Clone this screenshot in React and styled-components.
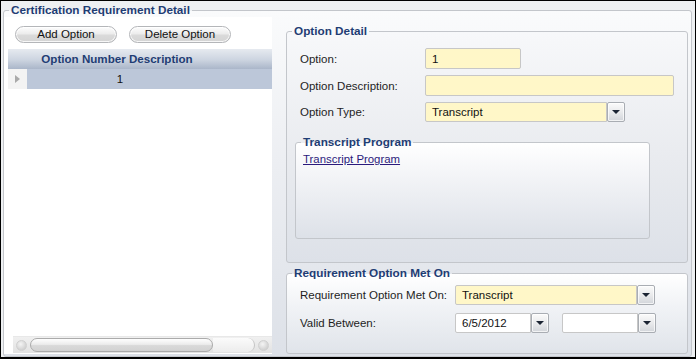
import React from 'react'
import styled, { createGlobalStyle } from 'styled-components'

const GlobalStyle = createGlobalStyle`
  html, body {
    margin: 0;
    padding: 0;
    background: #eef0f2;
  }

  body {
    font-family: "Liberation Sans", Arial, sans-serif;
    color: #1e1e1e;
  }
`

const Frame = styled.div`
  box-sizing: border-box;
  width: 696px;
  height: 359px;
  border: 1px solid #000;
  border-bottom-width: 2px;
  padding: 2px 3px 0 2px;
  background: #eef0f2;
  display: flex;
`

const GroupBox = styled.fieldset`
  box-sizing: border-box;
  margin: 0;
  padding: 0;
  min-width: 0;
  border: 1px solid #c3c6cb;
  border-radius: 3px;
  display: flex;
  flex-direction: column;
  background: ${props => props.$bg || 'transparent'};
  width: ${props => props.$width ? `${props.$width}px` : 'auto'};
  height: ${props => props.$height ? `${props.$height}px` : 'auto'};
  flex: ${props => props.$grow ? '1' : 'none'};
  margin-top: ${props => props.$top || 0}px;
`

const GroupTitle = styled.legend`
  margin-left: 5px;
  padding: 0 2px;
  font: bold 11.75px/14px "Liberation Sans", Arial, sans-serif;
  color: #1f3d74;
`

const OuterBody = styled.div`
  flex: 1;
  min-height: 0;
  display: flex;
  gap: 14px;
  padding: 0 3px 2px 0;
`

// left side: option list
const ListPanel = styled.div`
  box-sizing: border-box;
  width: 268px;
  background: #fff;
  display: flex;
  flex-direction: column;
  padding: 9px 0 1px 4px;
`

const ButtonRow = styled.div`
  display: flex;
  gap: 12px;
  margin-left: 7px;
`

const PillButton = styled.button`
  box-sizing: border-box;
  width: 102px;
  height: 17px;
  padding: 0;
  border: 1px solid #b4b6b9;
  border-radius: 9px;
  background: linear-gradient(#fdfdfd, #ececec 45%, #dadada 55%, #d4d4d4);
  box-shadow: inset 0 0 0 1px rgba(255, 255, 255, 0.8);
  font: 11.5px/15px "Liberation Sans", Arial, sans-serif;
  color: #111;
`

const Grid = styled.div`
  margin-top: 6px;
  display: flex;
  flex-direction: column;
`

const HeaderRow = styled.div`
  display: flex;
  height: 20px;
  background: linear-gradient(#e6eaf0, #ccd4e0 55%, #aab6c9);
`

const RowSelector = styled.div`
  box-sizing: border-box;
  width: 19px;
  display: flex;
  align-items: center;
  padding-left: 7px;
  background: ${props => props.$header ? 'transparent' : '#f3f3f3'};
`

const Arrow = styled.span`
  width: 0;
  height: 0;
  border-top: 4px solid transparent;
  border-bottom: 4px solid transparent;
  border-left: 5px solid #a9a9a9;
`

const HeaderCell = styled.div`
  width: 180px;
  text-align: center;
  font: bold 11.6px/20px "Liberation Sans", Arial, sans-serif;
  color: #1f3d74;
  white-space: nowrap;
`

const DataRow = styled.div`
  display: flex;
  height: 20px;
`

const DataCell = styled.div`
  flex: 1;
  background: #bcc7d9;
  font: 11.5px/20px "Liberation Sans", Arial, sans-serif;
  color: #111;
`

const CellText = styled.div`
  width: 186px;
  text-align: center;
`

const Spacer = styled.div`
  flex: 1;
`

const ScrollBar = styled.div`
  box-sizing: border-box;
  height: 17px;
  margin-left: 5px;
  display: flex;
  align-items: center;
  background: linear-gradient(#f0f0f0, #e2e2e2);
  border-top: 1px solid #e8e8e8;
`

const ScrollArrow = styled.div`
  width: 17px;
  height: 15px;
  display: flex;
  align-items: center;
  justify-content: center;

  &::after {
    content: '';
    width: 9px;
    height: 9px;
    border-radius: 50%;
    background: radial-gradient(circle at 40% 35%, #f4f4f4, #c4c4c4);
    border: 1px solid #d0d0d0;
  }
`

const ScrollThumb = styled.div`
  box-sizing: border-box;
  width: 183px;
  height: 14px;
  border: 1px solid #ababab;
  border-radius: 7px;
  background: linear-gradient(#fefefe, #ececec 45%, #d9d9d9 55%, #d2d2d2);
`

const ScrollTrack = styled.div`
  flex: 1;
  height: 14px;
  background: linear-gradient(#fbfbfb, #ececec);
  border-radius: 0 7px 7px 0;
  border-right: 1px solid #c4c4c4;
`

// right side: detail forms
const DetailColumn = styled.div`
  width: 402px;
  display: flex;
  flex-direction: column;
  gap: 3px;
  padding-top: 7px;
`

const GroupInner = styled.div`
  flex: 1;
  padding: ${props => props.$padding || '0'};
`

const Form = styled.div`
  display: grid;
  grid-template-columns: ${props => props.$labelWidth}px auto;
  row-gap: ${props => props.$gap}px;
  align-items: center;
  padding-left: 5px;
`

const Label = styled.div`
  font: 11.5px/14px "Liberation Sans", Arial, sans-serif;
  color: #1e1e1e;
  white-space: nowrap;
`

const TextField = styled.div`
  box-sizing: border-box;
  width: ${props => props.$width}px;
  height: ${props => props.$height || 21}px;
  border: 1px solid #c7c7c7;
  border-radius: 2px;
  background: ${props => props.$white ? '#fff' : '#fff7c8'};
  padding: 0 6px;
  display: flex;
  align-items: center;
  font: 11.5px/14px "Liberation Sans", Arial, sans-serif;
  color: #111;
`

const SelectBox = styled.div`
  display: flex;
  width: ${props => props.$width}px;
  height: ${props => props.$height || 20}px;
`

const SelectField = styled(TextField)`
  flex: 1;
  width: auto;
  height: 100%;
  border-radius: 2px 0 0 2px;
`

const DropButton = styled.div`
  box-sizing: border-box;
  width: 18px;
  height: 100%;
  border: 1px solid #a9adb3;
  border-radius: 2px;
  background: linear-gradient(#fbfbfb, #e9eaec 50%, #d2d5da);
  box-shadow: inset 0 0 0 1px rgba(255, 255, 255, 0.7);
  display: flex;
  align-items: center;
  justify-content: center;

  &::after {
    content: '';
    width: 0;
    height: 0;
    border-left: 4px solid transparent;
    border-right: 4px solid transparent;
    border-top: 4px solid #1b2433;
  }
`

const DateRow = styled.div`
  display: flex;
  gap: 13px;
`

const ProgramLink = styled.a`
  font: 11.4px/14px "Liberation Sans", Arial, sans-serif;
  color: #2b1a7c;
  text-decoration: underline;
`

const Select = ({ width, height, white, children }) => (
  <SelectBox $width={width} $height={height}>
    <SelectField $white={white}>{children}</SelectField>
    <DropButton />
  </SelectBox>
)

const App = () => {
  return (
    <>
      <GlobalStyle />
      <Frame>
        <GroupBox $grow $bg="linear-gradient(#fafbfc, #eceef2 45%, #dde1e8)">
          <GroupTitle>Certification Requirement Detail</GroupTitle>
          <OuterBody>
            <ListPanel>
              <ButtonRow>
                <PillButton>Add Option</PillButton>
                <PillButton>Delete Option</PillButton>
              </ButtonRow>

              <Grid>
                <HeaderRow>
                  <RowSelector $header />
                  <HeaderCell>Option Number Description</HeaderCell>
                </HeaderRow>
                <DataRow>
                  <RowSelector>
                    <Arrow />
                  </RowSelector>
                  <DataCell>
                    <CellText>1</CellText>
                  </DataCell>
                </DataRow>
              </Grid>

              <Spacer />

              <ScrollBar>
                <ScrollArrow />
                <ScrollThumb />
                <ScrollTrack />
                <ScrollArrow />
              </ScrollBar>
            </ListPanel>

            <DetailColumn>
              <GroupBox $height={239} $bg="linear-gradient(#f7f8fa, #e9ebef 55%, #dde1e8)">
                <GroupTitle>Option Detail</GroupTitle>
                <GroupInner $padding="10px 0 0 8px">
                  <Form $labelWidth={125} $gap={6}>
                    <Label>Option:</Label>
                    <TextField $width={96}>1</TextField>

                    <Label>Option Description:</Label>
                    <TextField $width={249} />

                    <Label>Option Type:</Label>
                    <Select width={200}>Transcript</Select>
                  </Form>

                  <GroupBox
                    $width={355}
                    $height={104}
                    $top={13}
                    $bg="linear-gradient(#ffffff, #f3f4f7 35%, #dde1e8)"
                  >
                    <GroupTitle>Transcript Program</GroupTitle>
                    <GroupInner $padding="0 0 0 7px">
                      <ProgramLink href="#">Transcript Program</ProgramLink>
                    </GroupInner>
                  </GroupBox>
                </GroupInner>
              </GroupBox>

              <GroupBox $grow $bg="linear-gradient(#ffffff, #f1f3f6 40%, #e0e4ea)">
                <GroupTitle>Requirement Option Met On</GroupTitle>
                <GroupInner $padding="5px 0 0 8px">
                  <Form $labelWidth={155} $gap={8}>
                    <Label>Requirement Option Met On:</Label>
                    <Select width={200}>Transcript</Select>

                    <Label>Valid Between:</Label>
                    <DateRow>
                      <Select width={94} white>6/5/2012</Select>
                      <Select width={94} white />
                    </DateRow>
                  </Form>
                </GroupInner>
              </GroupBox>
            </DetailColumn>
          </OuterBody>
        </GroupBox>
      </Frame>
    </>
  )
}

export default App
